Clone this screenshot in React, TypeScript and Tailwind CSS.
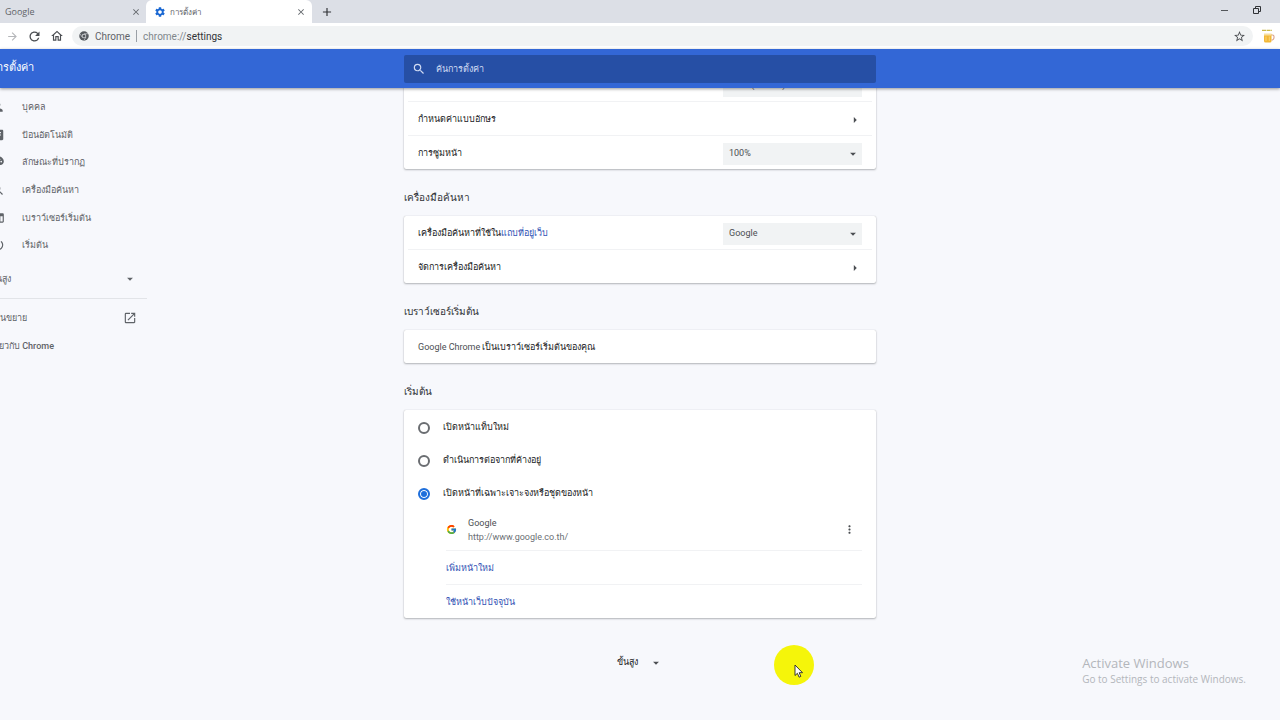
import type { ReactNode } from "react";
import { FcGoogle } from "react-icons/fc";
import {
  MdAdd,
  MdArrowDropDown,
  MdArrowForward,
  MdArrowRight,
  MdAssignment,
  MdClose,
  MdMoreVert,
  MdOpenInNew,
  MdOutlineHome,
  MdPalette,
  MdPerson,
  MdPowerSettingsNew,
  MdRefresh,
  MdSearch,
  MdSettings,
  MdStarBorder,
  MdWeb,
} from "react-icons/md";

const navItems = [
  { label: "บุคคล", icon: MdPerson },
  { label: "ป้อนอัตโนมัติ", icon: MdAssignment },
  { label: "ลักษณะที่ปรากฏ", icon: MdPalette },
  { label: "เครื่องมือค้นหา", icon: MdSearch },
  { label: "เบราว์เซอร์เริ่มต้น", icon: MdWeb },
  { label: "เริ่มต้น", icon: MdPowerSettingsNew },
];

const startupOptions = [
  { id: "new-tab", label: "เปิดหน้าแท็บใหม่" },
  { id: "continue", label: "ดำเนินการต่อจากที่ค้างอยู่" },
  { id: "specific", label: "เปิดหน้าที่เฉพาะเจาะจงหรือชุดของหน้า" },
];

function ChromeMark() {
  return (
    <svg viewBox="0 0 20 20" className="h-[10px] w-[10px] shrink-0">
      <circle cx="10" cy="10" r="9.5" fill="#55595e" />
      <path d="M10 5.5h8M6 12.200 2.500 6M13.800 12.300l-4 6.700" stroke="#dcdee1" strokeWidth="1.2" />
      <circle cx="10" cy="10" r="4.500" fill="#dcdee1" />
      <circle cx="10" cy="10" r="3" fill="#55595e" />
    </svg>
  );
}

function BeerIcon() {
  return (
    <svg viewBox="0 0 14 16" className="h-4 w-3.5">
      <path d="M1 2.4h10" stroke="#c9b84a" strokeWidth="1.4" strokeDasharray="4 .6" />
      <path d="M10 7h1.5a1.5 1.5 0 0 1 1.5 1.5v1A2.5 2.5 0 0 1 10.5 12" fill="none" stroke="#d9a18a" strokeWidth="1.1" />
      <path d="M3 6h7.5v7a1.5 1.5 0 0 1-1.5 1.5H4.5A1.5 1.5 0 0 1 3 13z" fill="#f2b736" />
      <path d="M3 5.5h7.5v2H3z" fill="#f7dfa0" />
      <path d="M5 8.5v4.5M8.3 8.5v4.5" stroke="#f9d272" strokeWidth="1" />
    </svg>
  );
}

function TabStrip() {
  return (
    <div className="flex h-[23px] items-stretch bg-[#dcdfe6] text-[9px] text-[#5f6368]">
      <div role="tab" className="flex w-[146px] items-center justify-between pl-[5px] pr-[5px]">
        <span className="font-['Open_Sans','Noto_Sans',sans-serif]">Google</span>
        <button aria-label="Close Google tab">
          <MdClose className="h-[10px] w-[10px]" />
        </button>
      </div>
      <div role="tab" aria-selected="true" className="flex w-[166px] items-center rounded-t-md bg-white pl-2 pr-1.5">
        <MdSettings className="h-3 w-3 text-[#1967d2]" />
        <span className="ml-1 flex-1 pt-0.5 text-[8px]">การตั้งค่า</span>
        <button aria-label="Close settings tab">
          <MdClose className="h-[10px] w-[10px]" />
        </button>
      </div>
      <button aria-label="New tab" className="ml-2 text-[#303236]">
        <MdAdd className="h-[14px] w-[14px]" />
      </button>
      <div className="ml-auto flex items-start gap-6 pr-[19px] pt-[6px] text-[#303236]">
        <button aria-label="Minimize">
          <svg viewBox="0 0 8 8" className="h-2 w-2" stroke="currentColor">
            <path d="M0 4.500h7" strokeWidth=".8" />
          </svg>
        </button>
        <button aria-label="Restore">
          <svg viewBox="0 0 8 8" className="h-2 w-2" fill="none" stroke="currentColor">
            <path d="M.5 2.500h5v5h-5zM2.500 2.500v-2h5v5h-2" />
          </svg>
        </button>
      </div>
    </div>
  );
}

function Toolbar() {
  return (
    <div className="flex h-[26px] items-center bg-white pl-1.5 pr-[5px] text-[#4b4e52]">
      <button aria-label="Forward" className="text-[#b4b6b9]">
        <MdArrowForward className="h-[13px] w-[13px]" />
      </button>
      <button aria-label="Reload" className="ml-2">
        <MdRefresh className="h-[15px] w-[15px]" />
      </button>
      <button aria-label="Home" className="ml-2">
        <MdOutlineHome className="h-[14px] w-[14px]" />
      </button>
      <div className="ml-2 flex h-5 flex-1 items-center rounded-full bg-[#f1f3f4] pl-[7px] pr-[7px] text-[10px]">
        <ChromeMark />
        <span className="ml-1.5 text-[#5f6368]">Chrome</span>
        <span className="mx-1.5 h-3 w-px bg-[#9aa0a6]" />
        <label htmlFor="address" className="text-[#80868b]">
          chrome://
        </label>
        <input id="address" defaultValue="settings" className="min-w-0 flex-1 bg-transparent text-[#303236] outline-none" />
        <button aria-label="Bookmark this page">
          <MdStarBorder className="h-[13px] w-[13px]" />
        </button>
      </div>
      <button aria-label="Extension" className="ml-2">
        <BeerIcon />
      </button>
    </div>
  );
}

function SettingsHeader() {
  return (
    <header className="relative z-10 grid h-[39px] grid-cols-[1fr_minmax(0,472px)_1fr] items-center bg-[#3367d6] text-white shadow-[0_1px_3px_rgba(0,0,0,0.4)]">
      <h1 className="-ml-[10px] text-[11px] font-medium">การตั้งค่า</h1>
      <label className="flex h-7 items-center rounded-xs bg-[#264fa5] pl-2 text-[#d0dbf3]">
        <MdSearch className="h-[14px] w-[14px]" />
        <input
          type="search"
          aria-label="ค้นการตั้งค่า"
          placeholder="ค้นการตั้งค่า"
          className="ml-2.5 flex-1 bg-transparent pt-0.5 text-[9px] outline-none placeholder:text-[#d0dbf3]"
        />
      </label>
    </header>
  );
}

function Sidebar() {
  return (
    <nav className="-ml-6 w-[171px] pt-[5px] text-[9px] font-medium text-[#5f6368]">
      <div className="flex h-[166px] flex-col">
        {navItems.map(({ label, icon: Icon }) => (
          <a key={label} href="#" className="flex flex-1 items-center gap-[17px] pl-[15px]">
            <Icon className="h-[14px] w-[14px]" />
            <span className="pt-0.5">{label}</span>
          </a>
        ))}
      </div>
      <button className="flex h-10 w-full items-center justify-between border-b border-[#e2e4e8] pl-[14px] pr-2.5">
        <span className="pt-0.5">ขั้นสูง</span>
        <MdArrowDropDown className="h-[14px] w-[14px]" />
      </button>
      <a href="#" className="mt-[5px] flex h-7 items-center justify-between pl-[14px] pr-2.5">
        <span className="pt-0.5">ส่วนขยาย</span>
        <MdOpenInNew className="h-[14px] w-[14px]" />
      </a>
      <a href="#" className="flex h-7 items-center pl-[15px]">
        <span className="pt-0.5">เกี่ยวกับ Chrome</span>
      </a>
    </nav>
  );
}

function Card({ children }: { children: ReactNode }) {
  return (
    <div className="rounded-xs bg-white shadow-[0_1px_2px_rgba(60,64,67,0.35),0_0_1px_rgba(60,64,67,0.3)]">{children}</div>
  );
}

function Section({ title, children }: { title: string; children: ReactNode }) {
  return (
    <section>
      <h2 className="mb-[9px] mt-5 text-[10px] leading-[18px] text-[#303236]">{title}</h2>
      <Card>{children}</Card>
    </section>
  );
}

function SelectRow({ id, label, value, first }: { id: string; label: ReactNode; value: string; first?: boolean }) {
  return (
    <div className={first ? "px-3.5" : "mx-1 border-t border-[#f1f2f4] px-2.5"}>
      <div className="flex h-[33px] items-center justify-between pt-0.5">
        <label htmlFor={id}>{label}</label>
        <div className="relative w-[139px]">
          <select id={id} className="h-[22px] w-full appearance-none bg-[#f1f3f4] px-1.5 text-[#4b4e52] outline-none">
            <option>{value}</option>
          </select>
          <MdArrowDropDown className="pointer-events-none absolute right-0.5 top-1 h-[14px] w-[14px] text-[#4b4e52]" />
        </div>
      </div>
    </div>
  );
}

function LinkRow({ label }: { label: string }) {
  return (
    <div className="mx-1 border-t border-[#f1f2f4] px-2.5">
      <button className="flex h-[33px] w-full items-center justify-between pt-0.5">
        {label}
        <MdArrowRight className="h-[14px] w-[14px] text-[#4b4e52]" />
      </button>
    </div>
  );
}

function StartupCard() {
  return (
    <>
      {startupOptions.map((option) => (
        <label key={option.id} className="flex h-[33px] items-center gap-[13px] px-3.5 pt-0.5">
          <input
            type="radio"
            name="startup"
            defaultChecked={option.id === "specific"}
            className="h-3 w-3 appearance-none rounded-full border-2 border-[#6a6d71] bg-white checked:border-[#1f6fdb] checked:bg-[#1f6fdb] checked:shadow-[inset_0_0_0_1px_white]"
          />
          {option.label}
        </label>
      ))}
      <div className="ml-[42px] mr-3.5">
        <div className="flex h-[41px] items-center">
          <FcGoogle className="h-[11px] w-[11px]" />
          <div className="ml-[11px] flex-1 leading-[14px]">
            <div className="text-[#4b4e52]">Google</div>
            <div className="text-[#6b6f74]">http://www.google.co.th/</div>
          </div>
          <button aria-label="More actions" className="mr-1.5">
            <MdMoreVert className="h-[13px] w-[13px] text-[#4b4e52]" />
          </button>
        </div>
        <a href="#" className="flex h-[34px] items-center border-t border-[#f1f2f4] pt-0.5 text-[#3152b5]">
          เพิ่มหน้าใหม่
        </a>
        <a href="#" className="flex h-[34px] items-center border-t border-[#f1f2f4] pt-0.5 text-[#3152b5]">
          ใช้หน้าเว็บปัจจุบัน
        </a>
      </div>
    </>
  );
}

export default function App() {
  return (
    <div className="relative flex h-screen flex-col overflow-hidden bg-[#f7f8fc] font-[Roboto,'Noto_Sans',sans-serif]">
      <TabStrip />
      <Toolbar />
      <SettingsHeader />
      <div className="grid min-h-0 flex-1 grid-cols-[1fr_minmax(0,472px)_1fr]">
        <Sidebar />
        {/* page is scrolled, so the first card slides under the header */}
        <main className="-mt-5 text-[9px] text-[#202124]">
          <Card>
            <SelectRow id="font-size" label="ขนาดแบบอักษร" value="กลาง (แนะนำ)" first />
            <LinkRow label="กำหนดค่าแบบอักษร" />
            <SelectRow id="zoom" label="การซูมหน้า" value="100%" />
          </Card>
          <Section title="เครื่องมือค้นหา">
            <SelectRow
              id="engine"
              first
              label={
                <>
                  เครื่องมือค้นหาที่ใช้ใน
                  <a href="#" className="text-[#3152b5]">
                    แถบที่อยู่เว็บ
                  </a>
                </>
              }
              value="Google"
            />
            <LinkRow label="จัดการเครื่องมือค้นหา" />
          </Section>
          <Section title="เบราว์เซอร์เริ่มต้น">
            <p className="flex h-[33px] items-center whitespace-pre px-3.5 pt-0.5">
              <span className="text-[#4b4e52]">Google Chrome </span>เป็นเบราว์เซอร์เริ่มต้นของคุณ
            </p>
          </Section>
          <Section title="เริ่มต้น">
            <StartupCard />
          </Section>
          <button className="mx-auto mt-8 flex h-6 items-center gap-[11px] pt-0.5">
            ขั้นสูง
            <MdArrowDropDown className="h-[14px] w-[14px] text-[#4b4e52]" />
          </button>
        </main>
      </div>

      <div className="pointer-events-none absolute bottom-[33px] right-[34px] font-['Open_Sans','Noto_Sans',sans-serif] text-[#b3b6bb]">
        <p className="text-[13px] leading-4">Activate Windows</p>
        <p className="text-[10px] leading-4">Go to Settings to activate Windows.</p>
      </div>

      <div className="pointer-events-none absolute bottom-[35px] left-[774px] h-10 w-10 rounded-full bg-[#f5f50a]">
        <svg viewBox="0 0 10 14" className="ml-5 mt-[19px] h-[14px] w-[10px]">
          <path d="M1 1v10.500l2.400-2.200 1.700 3.900 1.700-.8-1.600-3.700h3.300z" fill="#fff" stroke="#222" strokeWidth=".9" />
        </svg>
      </div>
    </div>
  );
}
